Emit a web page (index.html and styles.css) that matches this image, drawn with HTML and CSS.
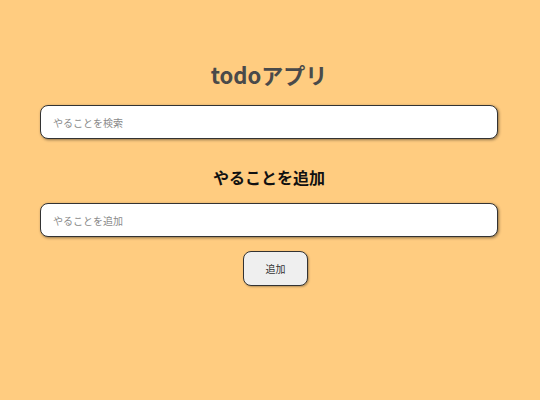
FILE: index.html
```html
<!DOCTYPE html>
<html lang="ja">
<head>
<meta charset="utf-8">
<link rel="stylesheet" href="styles.css">
</head>
<body>
<div class="app">
  <h1 class="title">todoアプリ</h1>
  <input class="field" type="text" placeholder="やることを検索">
  <h2 class="subtitle">やることを追加</h2>
  <input class="field" type="text" placeholder="やることを追加">
  <button class="add-btn">追加</button>
</div>
</body>
</html>
```
FILE: styles.css
```css
html, body {
  margin: 0;
  padding: 0;
  background: #ffcc80;
  height: 100%;
}
body {
  font-family: "Noto Sans CJK JP", "Noto Sans", sans-serif;
}
.app {
  display: flex;
  flex-direction: column;
  align-items: center;
  padding: 58px 42px 0 40px;
}
.title {
  margin: 0;
  font-size: 22px;
  line-height: 32px;
  font-weight: bold;
  color: #4a4a4a;
}
.field {
  box-sizing: border-box;
  width: 100%;
  height: 34px;
  margin-top: 15px;
  padding: 0 12px;
  border: 1.5px solid #333;
  border-radius: 8px;
  background: #fff;
  box-shadow: 1px 1px 3px rgba(0,0,0,0.45);
  font-family: inherit;
  font-size: 10px;
  outline: none;
}
.field::placeholder {
  color: #8a8a8a;
}
.subtitle {
  margin: 26px 0 0;
  font-size: 16px;
  line-height: 24px;
  font-weight: bold;
  color: #111;
}
.subtitle + .field {
  margin-top: 14px;
}
.add-btn {
  box-sizing: border-box;
  width: 65px;
  height: 35px;
  margin: 14px 0 0 13px;
  border: 1.5px solid #333;
  border-radius: 8px;
  background: #efefef;
  box-shadow: 1px 1px 2px rgba(0,0,0,0.3);
  font-family: inherit;
  font-size: 10px;
  color: #333;
}
```
